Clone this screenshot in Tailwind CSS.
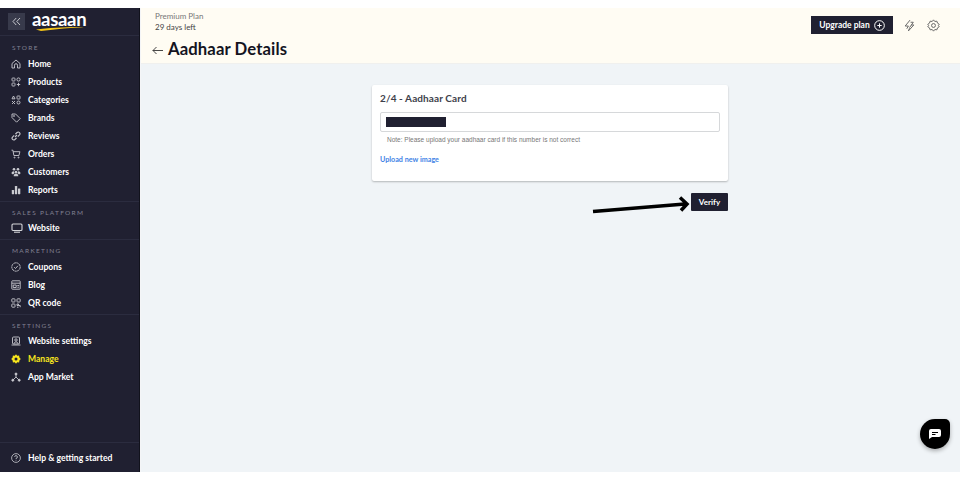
<!DOCTYPE html>
<html lang="en">
<head>
  <meta charset="UTF-8">
  <title>Aadhaar Details</title>
  <script src="https://cdn.jsdelivr.net/npm/@tailwindcss/browser@4"></script>
</head>
<body class="bg-white font-['Lato',sans-serif]">
  <div class="h-[480px] w-[960px] overflow-hidden py-2">
    <div class="relative flex h-[464px]">
      <!-- Sidebar -->
      <aside class="flex w-[140px] shrink-0 flex-col border-r border-[#11121c] bg-[#202031] text-[8.6px] font-bold text-white">
        <div class="flex h-[28px] items-center gap-[7px] border-b border-[#2b2c3f] pl-[8px]">
          <div class="flex h-[17px] w-[17px] items-center justify-center bg-[#383a4b] text-[#d5d6da]">
            <svg width="9" height="9" viewBox="0 0 9 9" fill="none" stroke="currentColor" stroke-width="0.9"><path d="M4.2 1 1 4.5l3.2 3.500M8 1 4.8 4.5 8 8"/></svg>
          </div>
          <div class="relative h-[22px] w-[56px]">
            <span class="block text-[18.500px] leading-[17px] font-bold tracking-[-0.3px] text-white">aasaan</span>
            <svg class="absolute top-[15px] left-[3px]" width="50" height="5" viewBox="0 0 50 5"><path d="M1 3.5C14 2 34 .8 49 1.2 36 1.8 22 3 6 5Z" fill="#f5c518"/></svg>
          </div>
        </div>

        <div class="border-b border-[#2b2c3f] pt-[6px] pb-[2px]">
          <p class="pl-[12px] text-[6.500px] leading-[12px] font-normal tracking-[1.3px] text-[#808192]">STORE</p>
          <nav class="mt-[1px]">
            <a class="flex h-[18px] items-center gap-[7px] pl-[11px]">
              <svg class="h-[10px] w-[10px] shrink-0 text-[#c9cad0]" viewBox="0 0 10 10" fill="none" stroke="currentColor" stroke-width="0.9"><path d="M1 4.5 5 1l4 3.5V9H6.5V6.2a1.5 1.5 0 0 0-3 0V9H1Z"/></svg>
              <span>Home</span>
            </a>
            <a class="flex h-[18px] items-center gap-[7px] pl-[11px]">
              <svg class="h-[10px] w-[10px] shrink-0 text-[#c9cad0]" viewBox="0 0 10 10" fill="none" stroke="currentColor" stroke-width="0.9"><rect x="1" y="1" width="3" height="3" rx=".7"/><circle cx="7.5" cy="2.5" r="1.6"/><rect x="1" y="6" width="3" height="3" rx=".7"/><path d="M7.5 5.8v3.4M5.8 7.5h3.4"/></svg>
              <span>Products</span>
            </a>
            <a class="flex h-[18px] items-center gap-[7px] pl-[11px]">
              <svg class="h-[10px] w-[10px] shrink-0 text-[#c9cad0]" viewBox="0 0 10 10" fill="none" stroke="currentColor" stroke-width="0.9"><path d="M2.5 1 4 3.8H1Z"/><rect x="6" y="1" width="3" height="3" rx=".5"/><path d="m1 6 3 3M4 6 1 9"/><circle cx="7.5" cy="7.5" r="1.5"/></svg>
              <span>Categories</span>
            </a>
            <a class="flex h-[18px] items-center gap-[7px] pl-[11px]">
              <svg class="h-[10px] w-[10px] shrink-0 text-[#c9cad0]" viewBox="0 0 10 10" fill="none" stroke="currentColor" stroke-width="0.9"><path d="M1 1h3.6L9.2 5.6 5.6 9.2 1 4.6Z"/><circle cx="3" cy="3" r=".5"/></svg>
              <span>Brands</span>
            </a>
            <a class="flex h-[18px] items-center gap-[7px] pl-[11px]">
              <svg class="h-[10px] w-[10px] shrink-0 text-[#c9cad0]" viewBox="0 0 10 10" fill="none" stroke="currentColor" stroke-width="1.1"><path d="M4 6 6 4M3.2 4.4 1.5 6.1a1.7 1.7 0 0 0 2.4 2.4l1.7-1.7M6.8 5.6l1.7-1.7a1.7 1.7 0 0 0-2.4-2.4L4.4 3.2"/></svg>
              <span>Reviews</span>
            </a>
            <a class="flex h-[18px] items-center gap-[7px] pl-[11px]">
              <svg class="h-[10px] w-[10px] shrink-0 text-[#c9cad0]" viewBox="0 0 10 10" fill="none" stroke="currentColor" stroke-width="0.9"><path d="M.5 1.2h1.4l1 5.3h5l1-3.8H2.2"/><circle cx="3.5" cy="8.5" r=".5"/><circle cx="7.5" cy="8.5" r=".5"/></svg>
              <span>Orders</span>
            </a>
            <a class="flex h-[18px] items-center gap-[7px] pl-[11px]">
              <svg class="h-[10px] w-[10px] shrink-0 text-[#c9cad0]" viewBox="0 0 10 10" fill="currentColor"><circle cx="3" cy="2.3" r="1.3"/><circle cx="7" cy="2.3" r="1.3"/><circle cx="5" cy="5" r="1.2"/><path d="M.5 6.5C.5 5 1.5 4.3 3 4.3L3.6 6 2 7.5ZM9.5 6.5C9.5 5 8.5 4.3 7 4.3L6.4 6 8 7.5ZM2.7 9.3c0-1.8 1-2.8 2.3-2.8s2.3 1 2.3 2.8Z"/></svg>
              <span>Customers</span>
            </a>
            <a class="flex h-[18px] items-center gap-[7px] pl-[11px]">
              <svg class="h-[10px] w-[10px] shrink-0 text-[#c9cad0]" viewBox="0 0 10 10" fill="currentColor"><rect x=".8" y="5" width="2.3" height="4.2" rx=".4"/><rect x="3.9" y="1" width="2.3" height="8.2" rx=".4"/><rect x="7" y="3.4" width="2.3" height="5.8" rx=".4"/></svg>
              <span>Reports</span>
            </a>
          </nav>
        </div>

        <div class="border-b border-[#2b2c3f] pt-[5px] pb-[2px]">
          <p class="pl-[12px] text-[6.500px] leading-[12px] font-normal tracking-[1.3px] text-[#808192]">SALES PLATFORM</p>
          <a class="flex h-[18px] items-center gap-[5px] pl-[11px]">
            <svg class="h-[10px] w-[12px] shrink-0 text-[#d5d6da]" viewBox="0 0 12 10" fill="none" stroke="currentColor" stroke-width="1.1"><rect x="1" y="1" width="10" height="6.5" rx="1"/><path d="M3 9.2h6"/></svg>
            <span>Website</span>
          </a>
        </div>

        <div class="border-b border-[#2b2c3f] pt-[5px] pb-[2px]">
          <p class="mb-[1px] pl-[12px] text-[6.500px] leading-[12px] font-normal tracking-[1.3px] text-[#808192]">MARKETING</p>
          <a class="flex h-[18px] items-center gap-[7px] pl-[11px]">
            <svg class="h-[10px] w-[10px] shrink-0 text-[#c9cad0]" viewBox="0 0 10 10" fill="none" stroke="currentColor" stroke-width="0.9"><circle cx="5" cy="5" r="4.2" stroke-dasharray="2.4 .4"/><path d="M3.2 5.2 4.5 6.5 6.9 3.8"/></svg>
            <span>Coupons</span>
          </a>
          <a class="flex h-[18px] items-center gap-[7px] pl-[11px]">
            <svg class="h-[10px] w-[10px] shrink-0 text-[#c9cad0]" viewBox="0 0 10 10" fill="none" stroke="currentColor" stroke-width="0.9"><rect x=".8" y=".8" width="8.4" height="8.4" rx=".6"/><path d="M.8 3.2h8.4M2.2 5h3v2.5h-3ZM6.3 5.5h1.8M6.3 7.2h1.8"/></svg>
            <span>Blog</span>
          </a>
          <a class="flex h-[18px] items-center gap-[7px] pl-[11px]">
            <svg class="h-[10px] w-[10px] shrink-0 text-[#c9cad0]" viewBox="0 0 10 10" fill="none" stroke="currentColor" stroke-width="0.9"><rect x=".8" y=".8" width="3.2" height="3.2" rx=".6"/><rect x="6" y=".8" width="3.2" height="3.2" rx=".6"/><rect x=".8" y="6" width="3.2" height="3.2" rx=".6"/><path d="M6 6h1.5v1.5H6ZM7.5 7.5h1.7v1.7M6 9.2h1.5"/></svg>
            <span>QR code</span>
          </a>
        </div>

        <div class="flex-1 pt-[5px]">
          <p class="pl-[12px] text-[6.500px] leading-[12px] font-normal tracking-[1.3px] text-[#808192]">SETTINGS</p>
          <a class="flex h-[18px] items-center gap-[7px] pl-[11px]">
            <svg class="h-[10px] w-[10px] shrink-0 text-[#c9cad0]" viewBox="0 0 10 10" fill="none" stroke="currentColor" stroke-width="0.9"><rect x="1.5" y="1" width="7" height="7" rx="1"/><circle cx="5" cy="4" r="1.2"/><path d="M3 7.8C3 6.5 4 6 5 6s2 .5 2 1.8M.5 9h9"/></svg>
            <span>Website settings</span>
          </a>
          <a class="flex h-[18px] items-center gap-[7px] pl-[11px] text-[#f7e51d]">
            <svg class="h-[10px] w-[10px] shrink-0" viewBox="0 0 10 10" fill="currentColor"><path fill-rule="evenodd" d="M5 .3 6.2 1.8 8.1 1.6 8.4 3.5 9.8 5 8.4 6.5 8.1 8.4 6.2 8.2 5 9.7 3.8 8.2 1.9 8.4 1.6 6.5.2 5 1.6 3.5 1.9 1.6 3.8 1.8ZM5 3.5a1.5 1.5 0 1 0 0 3 1.5 1.5 0 0 0 0-3Z"/></svg>
            <span>Manage</span>
          </a>
          <a class="flex h-[18px] items-center gap-[7px] pl-[11px]">
            <svg class="h-[10px] w-[10px] shrink-0 text-[#c9cad0]" viewBox="0 0 10 10" fill="none" stroke="currentColor" stroke-width="0.9"><path d="M5 2.5V5L2 8M5 5l3 3"/><circle cx="5" cy="2" r="1" fill="currentColor"/><circle cx="1.8" cy="8.2" r="1" fill="currentColor"/><circle cx="8.2" cy="8.2" r="1" fill="currentColor"/></svg>
            <span>App Market</span>
          </a>
        </div>

        <div class="flex h-[30px] items-center gap-[7px] border-t border-[#2b2c3f] pt-[1px] pl-[11px]">
          <svg class="h-[10px] w-[10px] shrink-0 text-[#c9cad0]" viewBox="0 0 10 10" fill="none" stroke="currentColor" stroke-width="0.8"><circle cx="5" cy="5" r="4.4"/><path d="M3.6 3.9A1.4 1.4 0 1 1 5 5.4v.8M5 7.2v.6"/></svg>
          <span>Help &amp; getting started</span>
        </div>
      </aside>

      <!-- Main -->
      <main class="flex min-w-0 flex-1 flex-col border-l border-[#f4f5f7] bg-[#f0f4f7]">
        <header class="flex h-[56px] justify-between border-b border-[#f0f0ee] bg-[#fffcf3]">
          <div class="pt-[3px] pl-[14px]">
            <p class="text-[8px] leading-[11px] text-[#777]">Premium Plan</p>
            <p class="text-[8px] leading-[11px] text-[#444]">29 days left</p>
            <div class="mt-[5px] -ml-[3px] flex items-center gap-[5px]">
              <svg class="mt-[2px]" width="11" height="9" viewBox="0 0 11 9" fill="none" stroke="#333" stroke-width="0.9"><path d="M11 4.5H.8M4.5 1 1 4.5 4.5 8"/></svg>
              <h1 class="text-[16.700px] leading-[22px] font-bold tracking-[0.1px] text-[#14141f]">Aadhaar Details</h1>
            </div>
          </div>
          <div class="flex h-[26px] items-center pt-[8px] pr-[20px]">
            <button class="-mr-[1px] flex h-[18px] w-[82px] -translate-x-[1px] items-center justify-center gap-[4px] bg-[#202031] text-[8.500px] font-bold text-white">
              Upgrade plan
              <svg width="11" height="11" viewBox="0 0 10 10" fill="none" stroke="currentColor" stroke-width="0.9"><circle cx="5" cy="5" r="4.4"/><path d="M5 3v4M3 5h4"/></svg>
            </button>
            <svg class="ml-[10px]" width="13" height="13" viewBox="0 0 12 12" fill="none" stroke="#666" stroke-width="0.9"><path d="M6.500 1 2 6.500h3L3.500 9M7 3h2.500L6 8M6 8.500 5 11l5-5.500H7.500"/></svg>
            <svg class="ml-[11px]" width="13" height="13" viewBox="0 0 12 12" fill="none" stroke="#666" stroke-width="0.9"><circle cx="6" cy="6" r="1.8"/><path d="m6 .8 1.2 1.5 1.9-.3.6 1.8 1.6 1.1-.8 1.100.8 1.100-1.600 1.100-.6 1.800-1.900-.3L6 11.200 4.800 9.700l-1.900.3-.6-1.800L.7 7.100l.8-1.100-.8-1.100 1.600-1.100.6-1.800 1.900.3Z"/></svg>
          </div>
        </header>

        <section class="flex flex-col items-center pt-[21px] pr-[1px]">
          <div class="w-[356px]">
            <div class="h-[96px] rounded-[2px] bg-white px-[8px] pt-[7px] shadow-[0_1px_2px_rgba(0,0,0,0.25)]">
              <h2 class="text-[10px] leading-[12px] font-bold tracking-[0.1px] text-[#3e3f4b]">2/4 - Aadhaar Card</h2>
              <div class="mt-[8px] flex h-[20px] items-center rounded-[2px] border border-[#d6d8da] pl-[5px]">
                <div class="h-[10px] w-[60px] bg-[#202031]"></div>
              </div>
              <p class="mt-[3px] pl-[7px] font-['Liberation_Sans',sans-serif] text-[6.500px] leading-[9px] text-[#777]">Note: Please upload your aadhaar card if this number is not correct</p>
              <a class="mt-[11px] block text-[7.200px] leading-[9px] font-bold text-[#3f83e6]">Upload new image</a>
            </div>
            <div class="relative mt-[12px] flex justify-end">
              <button class="h-[18px] w-[37px] rounded-[1px] bg-[#202031] text-[8px] font-bold text-white">Verify</button>
              <svg class="absolute top-[2px] left-[219px]" width="100" height="20" viewBox="0 0 100 20" fill="none" stroke="#000" stroke-width="3.5"><path d="M2 16.500 94 9M89 2.500l7 6.500-6 6.500"/></svg>
            </div>
          </div>
        </section>
      </main>

      <!-- Chat bubble -->
      <div class="absolute top-[411px] left-[920px] flex h-[30px] w-[30px] items-center justify-center rounded-[15px] rounded-tr-[5px] bg-black shadow-[0_2px_4px_rgba(0,0,0,0.3)]">
        <svg width="12" height="10" viewBox="0 0 12 10"><path d="M2 0h8a2 2 0 0 1 2 2v4a2 2 0 0 1-2 2H3L0 10V2a2 2 0 0 1 2-2Z" fill="#fff"/><path d="M3 3.500h6M3 5.500h3.500" stroke="#000"/></svg>
      </div>
    </div>
  </div>
</body>
</html>
